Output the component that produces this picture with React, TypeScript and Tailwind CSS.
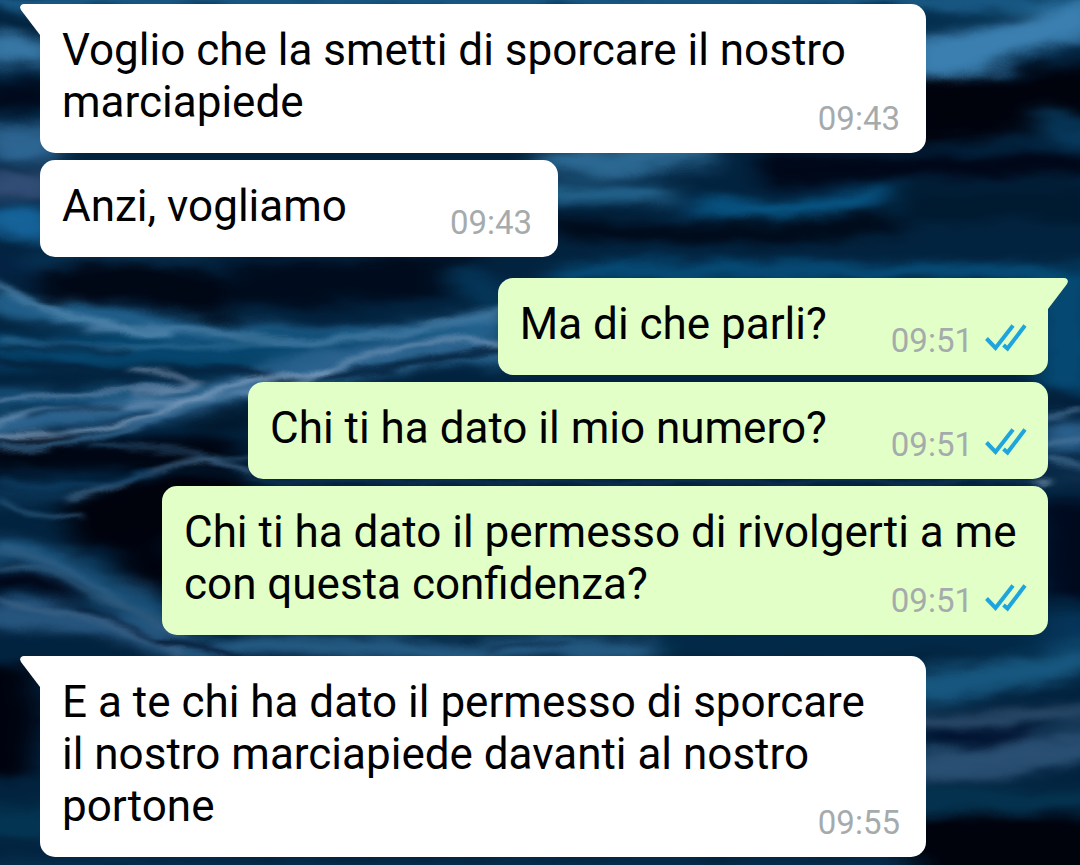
import clsx from 'clsx';

interface Message {
  lines: string[];
  time: string;
  outgoing?: boolean;
  tail?: boolean;
}

const messages: Message[] = [
  { lines: ['Voglio che la smetti di sporcare il nostro', 'marciapiede'], time: '09:43', tail: true },
  { lines: ['Anzi, vogliamo'], time: '09:43' },
  { lines: ['Ma di che parli?'], time: '09:51', outgoing: true, tail: true },
  { lines: ['Chi ti ha dato il mio numero?'], time: '09:51', outgoing: true },
  {
    lines: ['Chi ti ha dato il permesso di rivolgerti a me', 'con questa confidenza?'],
    time: '09:51',
    outgoing: true,
  },
  {
    lines: ['E a te chi ha dato il permesso di sporcare', 'il nostro marciapiede davanti al nostro', 'portone'],
    time: '09:55',
    tail: true,
  },
];

interface Wave {
  d: string;
  color: string;
  width: number;
  opacity?: number;
}

// Wide, soft swells that give the water its light and dark areas
const swells: Wave[] = [
  { d: 'M-20 0H1100', color: '#1b5f8c', width: 16 },
  { d: 'M-20 52Q20 40 60 60', color: '#3777a5', width: 34 },
  { d: 'M-20 97H60', color: '#000a1c', width: 30 },
  { d: 'M-20 145Q20 138 60 150', color: '#2d6592', width: 34 },
  { d: 'M-20 185H60', color: '#324d75', width: 30 },
  { d: 'M-20 225Q20 215 60 230', color: '#15639a', width: 28 },
  { d: 'M-20 265H60', color: '#042142', width: 24 },
  { d: 'M900 62Q1000 50 1100 12', color: '#3a7fb0', width: 44 },
  { d: 'M900 25Q950 20 1000 16', color: '#053252', width: 14 },
  { d: 'M900 115Q1000 105 1120 92', color: '#00020c', width: 62 },
  { d: 'M1040 112Q1065 130 1110 145', color: '#083d62', width: 20 },
  { d: 'M760 168Q900 166 1100 165', color: '#000718', width: 26 },
  { d: 'M540 162Q620 162 710 152', color: '#2b6892', width: 26 },
  { d: 'M540 196Q610 188 670 196', color: '#22618a', width: 22 },
  { d: 'M690 204Q760 220 890 198', color: '#075483', width: 20 },
  { d: 'M900 205H1100', color: '#001a30', width: 34 },
  { d: 'M550 228Q700 240 900 226', color: '#000a19', width: 20 },
  { d: 'M550 276Q800 264 1100 276', color: '#06507d', width: 16 },
  { d: 'M20 262Q100 252 200 262', color: '#073457', width: 14 },
  { d: 'M40 288Q120 272 230 300', color: '#000715', width: 42 },
  { d: 'M230 282Q340 288 480 270', color: '#000c1e', width: 44 },
  { d: 'M450 268Q500 300 510 320', color: '#053d63', width: 20 },
  { d: 'M-20 298Q80 318 210 332T510 322', color: '#22628e', width: 22 },
  { d: 'M-20 350Q150 350 510 352', color: '#06456d', width: 32 },
  { d: 'M-20 428Q100 418 250 384T510 350', color: '#2c648f', width: 28 },
  { d: 'M-20 398Q80 400 200 390', color: '#17527b', width: 16 },
  { d: 'M-20 456Q80 452 240 456', color: '#000613', width: 32 },
  { d: 'M190 430Q220 420 250 415', color: '#01172b', width: 18 },
  { d: 'M70 530Q130 502 250 508', color: '#00020c', width: 60 },
  { d: 'M120 560Q145 552 170 585', color: '#00030f', width: 56 },
  { d: 'M-20 498Q30 490 80 497', color: '#0b3556', width: 14 },
  { d: 'M-20 548Q80 562 175 630', color: '#1c557e', width: 26 },
  { d: 'M-20 585Q30 572 75 596', color: '#000516', width: 20 },
  { d: 'M-20 615Q90 610 190 650', color: '#26557e', width: 26 },
  { d: 'M180 648H660', color: '#245a82', width: 22 },
  { d: 'M660 645Q860 640 1080 645', color: '#022a48', width: 26 },
  { d: 'M-30 665V780', color: '#00030f', width: 130 },
  { d: 'M-20 822H60', color: '#033552', width: 34 },
  { d: 'M1065 270V395', color: '#054a74', width: 60 },
  { d: 'M1040 405H1100', color: '#031d38', width: 12 },
  { d: 'M1040 438H1100', color: '#2b608c', width: 36 },
  { d: 'M1040 475H1100', color: '#0d2d4c', width: 20 },
  { d: 'M1040 550H1120', color: '#000a1f', width: 100 },
  { d: 'M1040 630H1100', color: '#053459', width: 30 },
  { d: 'M900 688Q1010 682 1100 650', color: '#17577f', width: 30 },
  { d: 'M900 718Q1000 722 1100 712', color: '#2b4a6a', width: 16 },
  { d: 'M925 740Q980 734 1035 740', color: '#001230', width: 18 },
  { d: 'M900 768Q1010 768 1100 738', color: '#294f72', width: 30 },
  { d: 'M900 800H1100', color: '#04334f', width: 22 },
  { d: 'M900 850H1120', color: '#00020c', width: 66 },
  { d: 'M-20 865H920', color: '#06304f', width: 10 },
];

// Thin crests and ripples on top of the swells
const ripples: Wave[] = [
  { d: 'M-5 281Q25 308 75 320T170 335', color: '#4d84ac', width: 7 },
  { d: 'M90 330Q170 325 245 336T400 332T510 306', color: '#5283aa', width: 8, opacity: 0.6 },
  { d: 'M0 340Q100 352 230 345T500 318', color: '#3b76a0', width: 7, opacity: 0.5 },
  { d: 'M0 360Q60 372 150 371T280 378T510 345', color: '#04233f', width: 8 },
  { d: 'M0 348Q60 345 130 352', color: '#042b49', width: 5 },
  { d: 'M130 368Q165 372 198 385Q180 393 135 395', color: '#7891b0', width: 4 },
  { d: 'M-5 402Q100 390 195 387', color: '#6588ac', width: 4 },
  { d: 'M-5 424Q90 404 180 401T350 364T500 344', color: '#6288ad', width: 6 },
  { d: 'M-5 436Q90 438 180 404T330 372', color: '#82a0c0', width: 5 },
  { d: 'M0 447Q80 446 140 425T250 388', color: '#3d6f98', width: 5 },
  { d: 'M30 420Q80 407 120 405', color: '#062b4b', width: 4 },
  { d: 'M50 432Q100 423 150 410', color: '#082f50', width: 4 },
  { d: 'M10 412Q60 405 90 403', color: '#062b4b', width: 3 },
  { d: 'M90 447Q160 445 210 455T250 455', color: '#2f5b80', width: 3 },
  { d: 'M70 500Q140 480 180 461Q210 452 250 475', color: '#41698c', width: 5 },
  { d: 'M0 480Q80 500 150 471', color: '#0d3b5e', width: 6 },
  { d: 'M0 500Q25 518 80 517', color: '#315f84', width: 4 },
  { d: 'M0 548Q60 560 100 588T180 635', color: '#315e84', width: 6 },
  { d: 'M0 570Q40 560 70 580T160 622', color: '#2d5679', width: 5 },
  { d: 'M0 600Q80 610 180 652', color: '#3a6085', width: 6 },
  { d: 'M80 608Q130 625 165 645', color: '#061f3c', width: 4 },
  { d: 'M160 642Q200 642 240 658', color: '#051a35', width: 6 },
  { d: 'M490 652Q530 642 570 643', color: '#13385a', width: 5 },
  { d: 'M250 482Q400 480 500 482T1040 480', color: '#153b5a', width: 3 },
  { d: 'M1045 418L1085 412M1040 443L1085 437M1045 460L1085 468', color: '#4a7499', width: 4 },
  { d: 'M1036 480H1050', color: '#9fc0d8', width: 3 },
];

function OceanWallpaper() {
  return (
    <svg
      aria-hidden="true"
      viewBox="0 0 1080 865"
      preserveAspectRatio="xMidYMid slice"
      className="absolute inset-0 -z-10 h-full w-full bg-[#02233f]"
    >
      <defs>
        <filter
          id="swell"
          x="-40"
          y="-40"
          width="1160"
          height="945"
          filterUnits="userSpaceOnUse"
          colorInterpolationFilters="sRGB"
        >
          <feGaussianBlur stdDeviation="14 6" result="soft" />
          <feTurbulence type="fractalNoise" baseFrequency="0.012 0.03" numOctaves="3" seed="2" result="noise" />
          <feDisplacementMap in="soft" in2="noise" scale="22" xChannelSelector="R" yChannelSelector="G" />
        </filter>
        <filter
          id="ripple"
          x="-40"
          y="-40"
          width="1160"
          height="945"
          filterUnits="userSpaceOnUse"
          colorInterpolationFilters="sRGB"
        >
          <feGaussianBlur stdDeviation="5 2" result="soft" />
          <feTurbulence type="fractalNoise" baseFrequency="0.015 0.04" numOctaves="3" seed="4" result="noise" />
          <feDisplacementMap in="soft" in2="noise" scale="14" xChannelSelector="R" yChannelSelector="G" />
        </filter>
      </defs>
      <g fill="none" filter="url(#swell)">
        <rect x="-40" y="-40" width="1160" height="945" fill="#02233f" />
        {swells.map((w) => (
          <path key={w.d} d={w.d} stroke={w.color} strokeWidth={w.width} />
        ))}
      </g>
      <g fill="none" strokeLinecap="round" filter="url(#ripple)">
        {ripples.map((w) => (
          <path key={w.d} d={w.d} stroke={w.color} strokeWidth={w.width} opacity={w.opacity ?? 0.9} />
        ))}
      </g>
    </svg>
  );
}

function Tail({ outgoing }: { outgoing?: boolean }) {
  return (
    <svg
      aria-hidden="true"
      viewBox="0 0 21 31"
      className={clsx(
        'absolute top-0 h-[31px] w-[21px]',
        outgoing ? '-right-5 -scale-x-100 fill-[#e1ffc7]' : '-left-5 fill-white',
      )}
    >
      <path d="M21 0H4C0.5 0 -0.8 3 1 6L20 31H21Z" />
    </svg>
  );
}

function ReadTicks() {
  return (
    <svg
      role="img"
      aria-label="Letto"
      viewBox="0 0 42 28"
      className="mb-[6px] h-7 w-[42px] fill-none stroke-[#1fa5dd] stroke-4"
    >
      <path d="M1.5 14.5L10.5 24L28 1.5" />
      <path d="M18.5 21L22.5 24.5L40 1.5" />
    </svg>
  );
}

function Bubble({ message }: { message: Message }) {
  const { lines, time, outgoing, tail } = message;
  const last = lines.length - 1;

  return (
    <li
      className={clsx(
        'relative max-w-full rounded-[15px] pt-5 pb-[14px] pl-[22px]',
        outgoing ? 'self-end bg-[#e1ffc7] pr-[21px]' : 'self-start bg-white pr-[26px]',
        last > 0 && 'w-[886px]',
        tail && (outgoing ? 'rounded-tr-none' : 'rounded-tl-none'),
        tail && 'not-first:mt-[14px]',
      )}
    >
      {tail && <Tail outgoing={outgoing} />}
      {lines.slice(0, last).map((line) => (
        <p key={line} className="whitespace-nowrap">
          {line}
        </p>
      ))}
      <div className={clsx('flex items-end justify-between', outgoing ? 'gap-16' : 'gap-[103px]')}>
        <p className="mb-[11px] whitespace-nowrap">{lines[last]}</p>
        <div className="flex items-center gap-3 text-[33px] leading-10 text-[#a5abad]">
          <time>{time}</time>
          {outgoing && <ReadTicks />}
        </div>
      </div>
    </li>
  );
}

export default function App() {
  return (
    <main className="relative isolate min-h-screen overflow-hidden font-[Roboto,sans-serif] text-[44px] leading-[52px] text-black">
      <OceanWallpaper />
      <ul className="flex flex-col gap-[7px] pt-1 pr-8 pb-2 pl-10">
        {messages.map((message) => (
          <Bubble key={message.lines[0]} message={message} />
        ))}
      </ul>
    </main>
  );
}
